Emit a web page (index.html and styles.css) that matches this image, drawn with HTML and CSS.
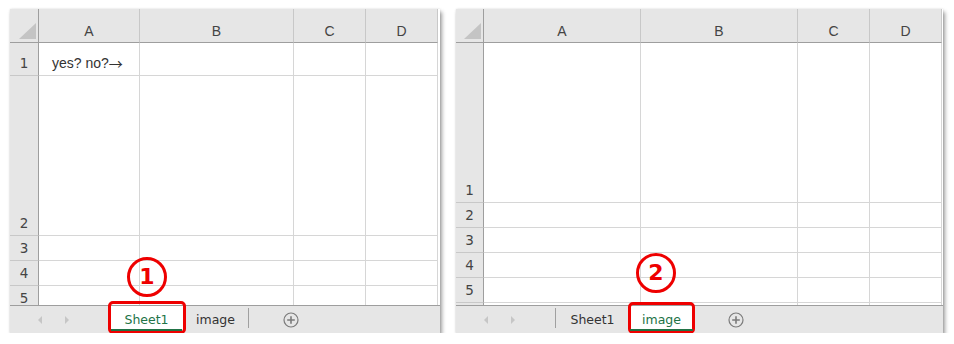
FILE: index.html
```html
<!DOCTYPE html>
<html lang="ja">
<head>
  <meta charset="UTF-8" />
  <title>Sheet tabs</title>
  <link rel="stylesheet" href="styles.css">
</head>
<body>
  <div class="page">

    <!-- 左：Sheet1 を選択 -->
    <div class="window window-left">
      <div class="sheet sheet-left">
        <div class="corner"></div>
        <div class="col-head">A</div>
        <div class="col-head">B</div>
        <div class="col-head">C</div>
        <div class="col-head">D</div>

        <div class="row-head">1</div>
        <div class="cell">yes? no?<span class="cjk">→</span></div>
        <div class="cell"></div>
        <div class="cell"></div>
        <div class="cell"></div>

        <div class="row-head">2</div>
        <div class="cell"></div>
        <div class="cell"></div>
        <div class="cell"></div>
        <div class="cell"></div>

        <div class="row-head">3</div>
        <div class="cell"></div>
        <div class="cell"></div>
        <div class="cell"></div>
        <div class="cell"></div>

        <div class="row-head">4</div>
        <div class="cell"></div>
        <div class="cell"></div>
        <div class="cell"></div>
        <div class="cell"></div>

        <div class="row-head">5</div>
        <div class="cell"></div>
        <div class="cell"></div>
        <div class="cell"></div>
        <div class="cell"></div>
      </div>

      <div class="tabbar">
        <div class="nav">
          <span class="arrow arrow-prev"></span>
          <span class="arrow arrow-next"></span>
        </div>
        <div class="tab tab-sheet1 active">Sheet1<span class="mark"></span></div>
        <div class="tab tab-image">image</div>
        <div class="sep"></div>
        <div class="add">
          <svg width="16" height="16" viewBox="0 0 16 16">
            <circle cx="8" cy="8" r="7" fill="none" stroke="#7b7b7b" stroke-width="1.2"/>
            <path d="M8 4.2v7.6M4.2 8h7.6" stroke="#7b7b7b" stroke-width="1.6"/>
          </svg>
        </div>
      </div>

      <div class="badge badge-1">1</div>
    </div>

    <!-- 右：image を選択 -->
    <div class="window window-right">
      <div class="sheet sheet-right">
        <div class="corner"></div>
        <div class="col-head">A</div>
        <div class="col-head">B</div>
        <div class="col-head">C</div>
        <div class="col-head">D</div>

        <div class="row-head">1</div>
        <div class="cell"></div>
        <div class="cell"></div>
        <div class="cell"></div>
        <div class="cell"></div>

        <div class="row-head">2</div>
        <div class="cell"></div>
        <div class="cell"></div>
        <div class="cell"></div>
        <div class="cell"></div>

        <div class="row-head">3</div>
        <div class="cell"></div>
        <div class="cell"></div>
        <div class="cell"></div>
        <div class="cell"></div>

        <div class="row-head">4</div>
        <div class="cell"></div>
        <div class="cell"></div>
        <div class="cell"></div>
        <div class="cell"></div>

        <div class="row-head">5</div>
        <div class="cell"></div>
        <div class="cell"></div>
        <div class="cell"></div>
        <div class="cell"></div>

        <div class="row-head"></div>
        <div class="cell"></div>
        <div class="cell"></div>
        <div class="cell"></div>
        <div class="cell"></div>
      </div>

      <div class="tabbar">
        <div class="nav nav-short">
          <span class="arrow arrow-prev"></span>
          <span class="arrow arrow-next"></span>
        </div>
        <div class="sep"></div>
        <div class="tab tab-sheet1">Sheet1</div>
        <div class="tab tab-image active">image<span class="mark mark-2"></span></div>
        <div class="add">
          <svg width="16" height="16" viewBox="0 0 16 16">
            <circle cx="8" cy="8" r="7" fill="none" stroke="#7b7b7b" stroke-width="1.2"/>
            <path d="M8 4.2v7.6M4.2 8h7.6" stroke="#7b7b7b" stroke-width="1.6"/>
          </svg>
        </div>
      </div>

      <div class="badge badge-2">2</div>
    </div>

  </div>
</body>
</html>
```

FILE: styles.css
```css
/* リセット */
* {
  margin: 0;
  padding: 0;
  box-sizing: border-box;
}
body {
  background: #fff;
  color: #222;
  font-family: "Liberation Sans", "Noto Sans CJK JP", sans-serif;
}
.page {
  display: flex;
  align-items: flex-start;
  gap: 16px;
  padding: 9px 0 0 10px;
}

/* ウィンドウ */
.window {
  position: relative;
  background: #fff;
  box-shadow: 2px 3px 4px rgba(0,0,0,0.38), 0 0 2px rgba(0,0,0,0.12);
}
.window-left {
  width: 430px;
}
.window-right {
  width: 487px;
}

/* シート本体 */
.sheet {
  display: grid;
  height: 296px;
  overflow: hidden;
  background: #fff;
}
.sheet-left {
  grid-template-columns: 29px 101px 154px 72px 72px;
  grid-template-rows: 34px 33px 160px 25px 25px 25px;
}
.sheet-right {
  grid-template-columns: 28px 157px 157px 72px 72px;
  grid-template-rows: 34px 160px 25px 25px 25px 25px 25px;
}

.corner {
  position: relative;
  background: #e6e6e6;
  border-right: 1px solid #9e9e9e;
  border-bottom: 1px solid #9e9e9e;
}
.corner::after {
  content: "";
  position: absolute;
  right: 2px;
  bottom: 3px;
  width: 17px;
  height: 16px;
  background: #c4c4c4;
  clip-path: polygon(100% 0, 100% 100%, 0 100%);
}

.col-head {
  display: flex;
  justify-content: center;
  align-items: flex-end;
  padding-bottom: 3px;
  background: #e6e6e6;
  border-right: 1px solid #c8c8c8;
  border-bottom: 1px solid #9e9e9e;
  color: #444;
  font-size: 14px;
  line-height: 16px;
}
.row-head {
  display: flex;
  justify-content: center;
  align-items: flex-end;
  padding-bottom: 4px;
  background: #e6e6e6;
  border-right: 1px solid #9e9e9e;
  border-bottom: 1px solid #c8c8c8;
  color: #444;
  font-family: "DejaVu Sans", sans-serif;
  font-size: 13.5px;
  line-height: 16px;
}
.cell {
  display: flex;
  align-items: flex-end;
  padding: 0 0 4px 13px;
  border-right: 1px solid #d6d6d6;
  border-bottom: 1px solid #d6d6d6;
  font-size: 14px;
  line-height: 16px;
  color: #333;
  white-space: nowrap;
}
.cjk {
  font-family: "Noto Sans CJK JP", sans-serif;
  font-size: 14px;
  line-height: 16px;
}

/* シート見出しバー */
.tabbar {
  display: flex;
  height: 28px;
  background: #e6e6e6;
  border-top: 1px solid #9e9e9e;
}
.nav {
  display: flex;
  align-items: center;
  gap: 23px;
  width: 100px;
  padding-left: 28px;
}
.nav-short {
  width: 99px;
}
.arrow {
  width: 0;
  height: 0;
  border-top: 4px solid transparent;
  border-bottom: 4px solid transparent;
}
.arrow-prev {
  border-right: 4px solid #c6c6c6;
}
.arrow-next {
  border-left: 4px solid #c6c6c6;
}

.tab {
  position: relative;
  display: flex;
  justify-content: center;
  align-items: center;
  padding-bottom: 1px;
  color: #333;
  font-family: "DejaVu Sans", sans-serif;
  font-size: 12.5px;
}
.tab-sheet1 {
  width: 73px;
}
.tab-image {
  width: 65px;
}
.tab.active {
  background: #fff;
  color: #217346;
}
.tab.active::after {
  content: "";
  position: absolute;
  left: 1px;
  right: 1px;
  bottom: 2px;
  height: 2px;
  background: #217346;
}
.sep {
  width: 1px;
  margin: 2px 0 5px;
  background: #a0a0a0;
}
.add {
  display: flex;
  align-items: center;
  margin-left: 34px;
}

/* 注釈（赤枠と番号） */
.mark {
  position: absolute;
  top: -5px;
  left: -2px;
  right: -3px;
  bottom: -1px;
  border: 3px solid #e00;
  border-radius: 5px;
}
.mark-2 {
  top: -4px;
  left: -1px;
  right: -1px;
  bottom: -1px;
}
.badge {
  position: absolute;
  width: 40px;
  height: 40px;
  border: 3px solid #e00;
  border-radius: 50%;
  color: #e00;
  font-family: "DejaVu Sans", sans-serif;
  font-weight: bold;
  font-size: 22px;
  line-height: 34px;
  text-align: center;
}
.badge-1 {
  left: 117px;
  top: 248px;
}
.badge-2 {
  left: 180px;
  top: 244px;
}
```
